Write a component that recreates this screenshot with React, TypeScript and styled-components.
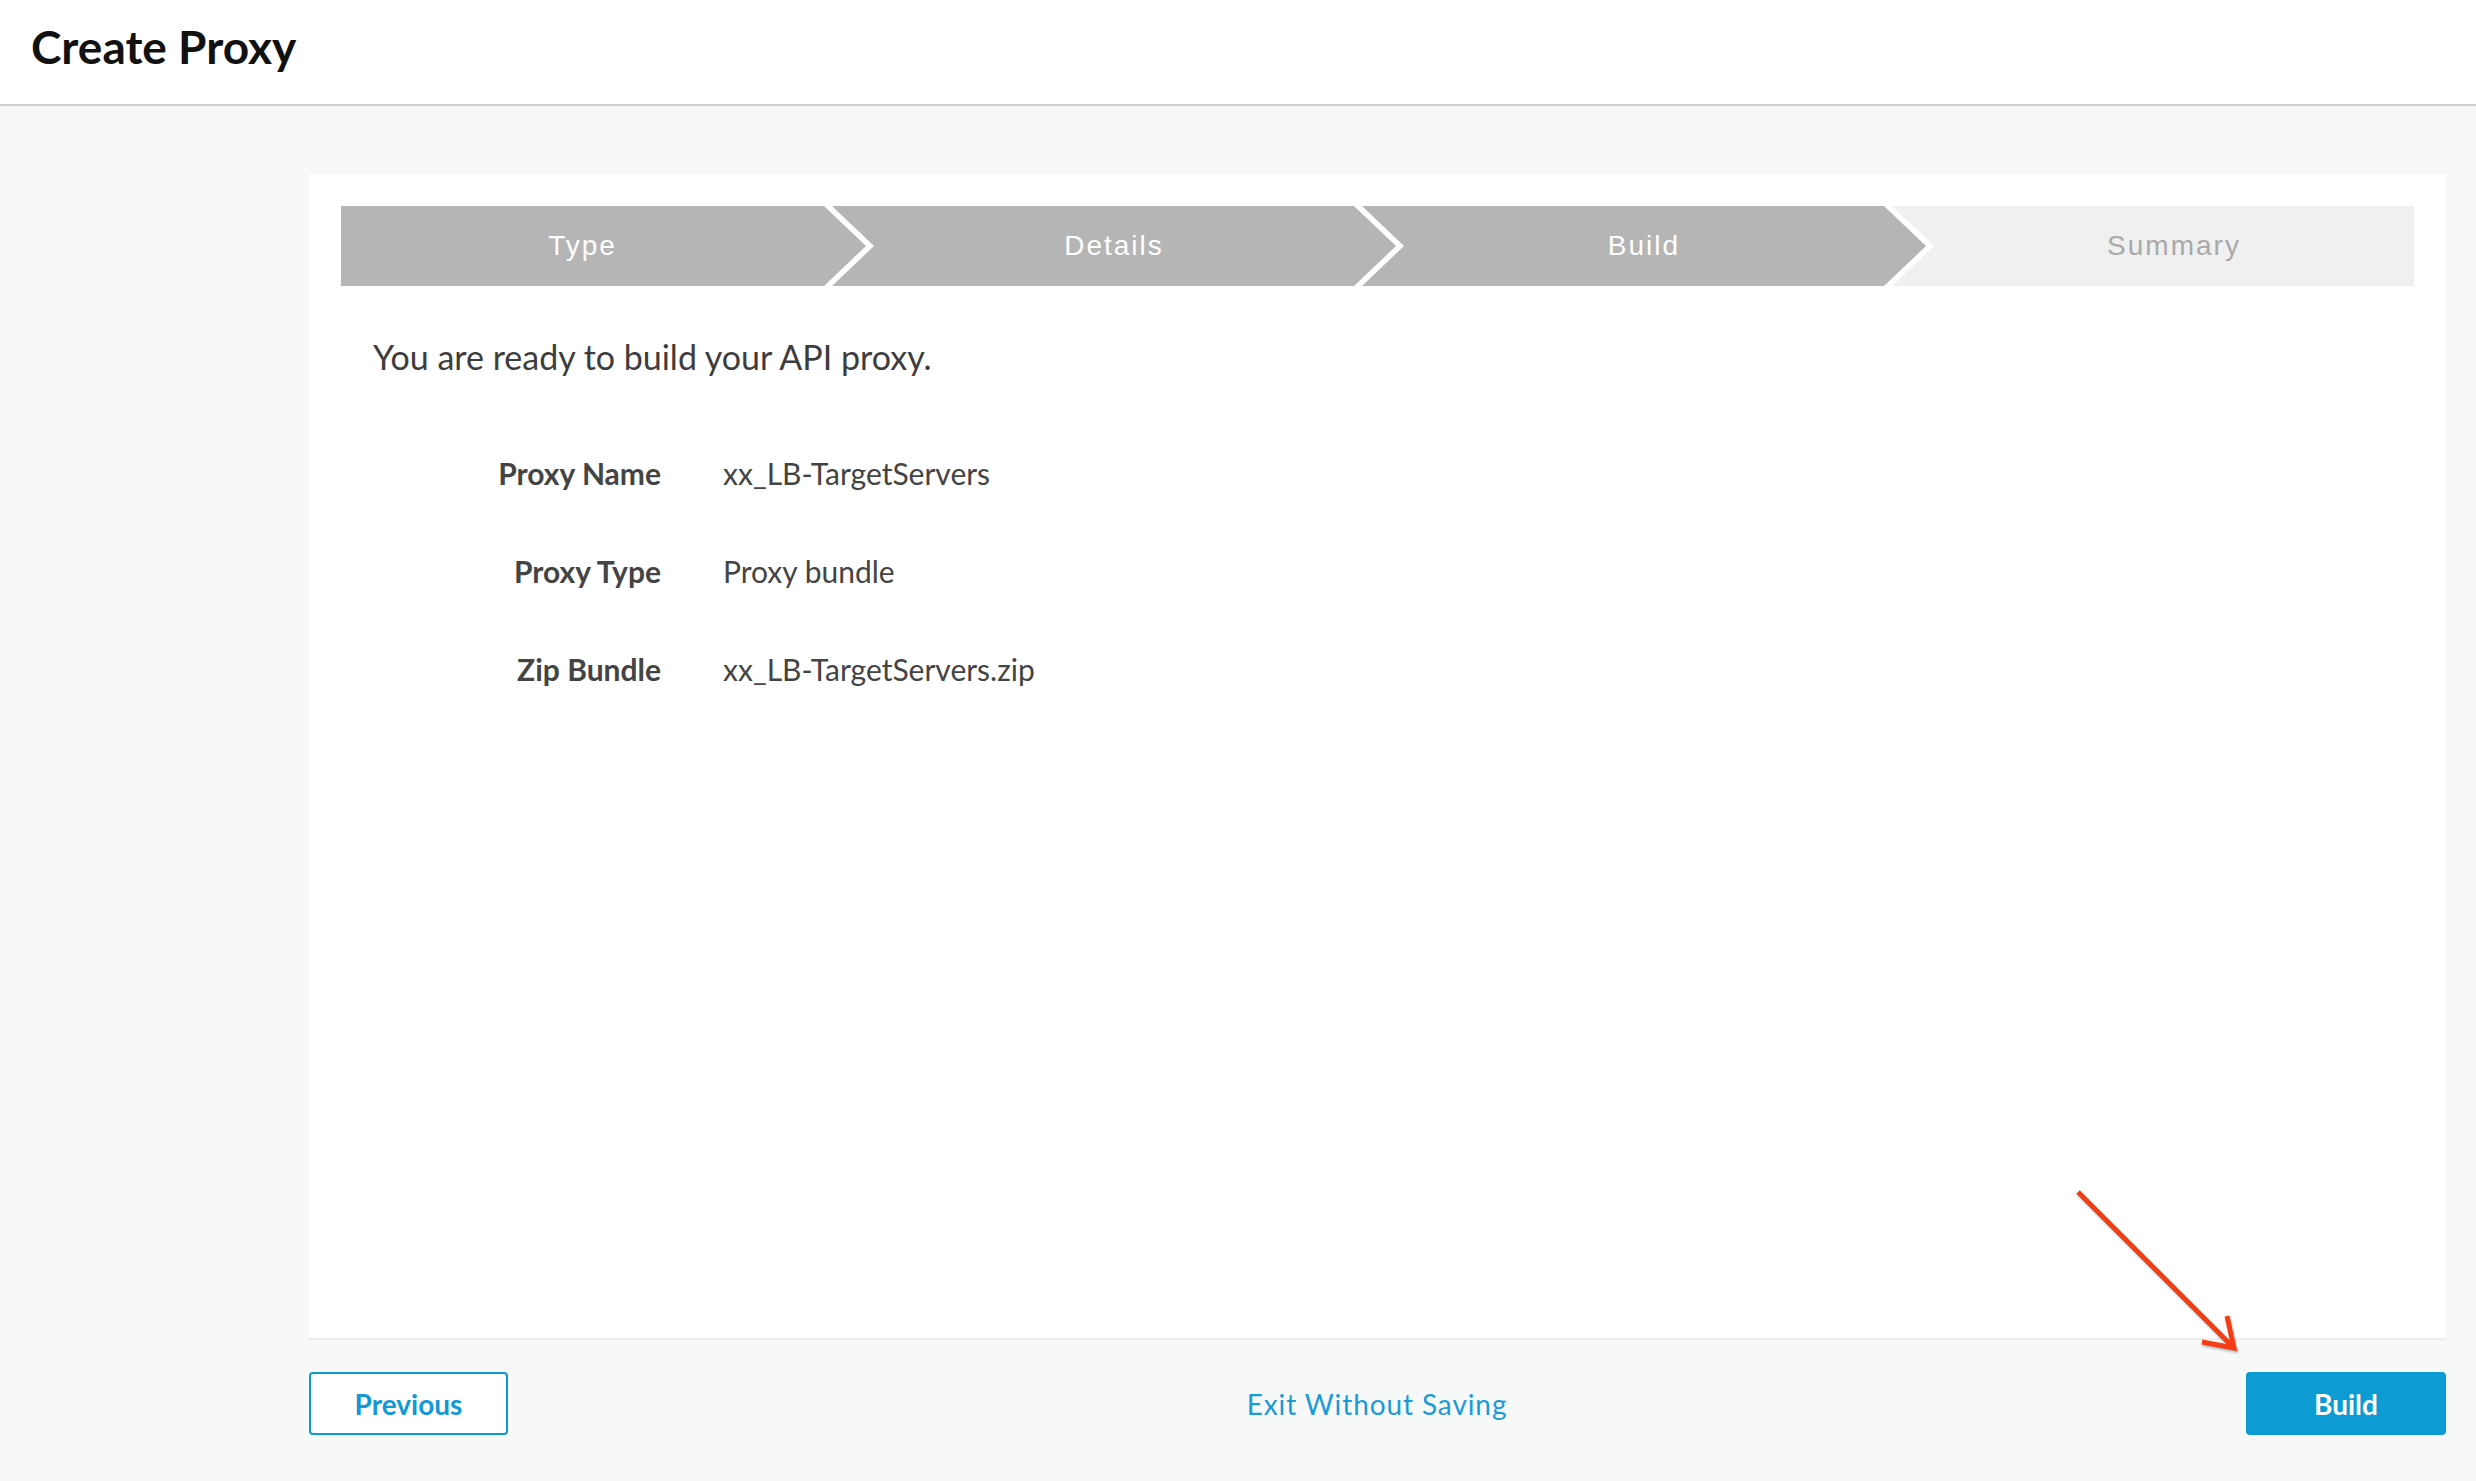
import React from "react";
import styled, { createGlobalStyle } from "styled-components";

const GlobalStyle = createGlobalStyle`
  html, body {
    margin: 0;
    padding: 0;
    background: #f7f8f8;
    font-family: Lato, "Open Sans", Arial, sans-serif;
  }
  * {
    box-sizing: border-box;
  }
`;

type StepState = "done" | "todo";
type StepShape = "first" | "middle" | "last";

const steps: { label: string; state: StepState; width: number }[] = [
  { label: "Type", state: "done", width: 525 },
  { label: "Details", state: "done", width: 564 },
  { label: "Build", state: "done", width: 564 },
  { label: "Summary", state: "todo", width: 522 },
];

const summary = [
  { label: "Proxy Name", value: "xx_LB-TargetServers" },
  { label: "Proxy Type", value: "Proxy bundle" },
  { label: "Zip Bundle", value: "xx_LB-TargetServers.zip" },
];

const ARROW = 42;
const GAP = 8;

const shapes: Record<StepShape, string> = {
  first: `polygon(0 0, calc(100% - ${ARROW}px) 0, 100% 50%, calc(100% - ${ARROW}px) 100%, 0 100%)`,
  middle: `polygon(0 0, calc(100% - ${ARROW}px) 0, 100% 50%, calc(100% - ${ARROW}px) 100%, 0 100%, ${ARROW}px 50%)`,
  last: `polygon(0 0, 100% 0, 100% 100%, 0 100%, ${ARROW}px 50%)`,
};

const App = () => {
  return (
    <Page>
      <GlobalStyle />
      <Header>
        <Title>Create Proxy</Title>
      </Header>
      <Main>
        <Panel>
          <Stepper>
            {steps.map((step, i) => {
              const shape: StepShape =
                i === 0 ? "first" : i === steps.length - 1 ? "last" : "middle";
              return (
                <Step key={step.label} $state={step.state} $shape={shape} $width={step.width}>
                  {step.label}
                </Step>
              );
            })}
          </Stepper>
          <Body>
            <Intro>You are ready to build your API proxy.</Intro>
            <SummaryGrid>
              {summary.map((row) => (
                <React.Fragment key={row.label}>
                  <SummaryLabel>{row.label}</SummaryLabel>
                  <SummaryValue>{row.value}</SummaryValue>
                </React.Fragment>
              ))}
            </SummaryGrid>
          </Body>
        </Panel>
        <Footer>
          <OutlineButton>Previous</OutlineButton>
          <ExitLink>Exit Without Saving</ExitLink>
          <PrimaryButton>Build</PrimaryButton>
        </Footer>
      </Main>
      <Callout width="200" height="200" viewBox="0 0 200 200">
        <g stroke="#f43d14" strokeWidth="5" fill="none" strokeLinecap="butt">
          <line x1="18" y1="17" x2="172" y2="171" />
          <polyline points="167,141 174,173 142,167" strokeLinejoin="miter" />
        </g>
      </Callout>
    </Page>
  );
};

const Page = styled.div`
  position: relative;
  min-height: 1481px;
  background: #f7f8f8;
`;

const Header = styled.header`
  height: 106px;
  background: #ffffff;
  border-bottom: 2px solid #cfcfcf;
  padding: 19px 31px 0;
`;

const Title = styled.h1`
  margin: 0;
  font-size: 46px;
  line-height: 56px;
  font-weight: 700;
  color: #111111;
`;

const Main = styled.main`
  padding: 68px 30px 0 309px;
`;

const Panel = styled.section`
  height: 1166px;
  background: #ffffff;
  border-bottom: 2px solid #eeeeee;
  padding: 32px;
`;

const Stepper = styled.div`
  display: flex;
  height: 80px;
`;

const Step = styled.div<{ $state: StepState; $shape: StepShape; $width: number }>`
  flex: 0 0 ${(p) => p.$width}px;
  margin-left: ${(p) => (p.$shape === "first" ? 0 : -(ARROW - GAP))}px;
  padding-left: ${(p) => (p.$shape === "first" ? 0 : ARROW)}px;
  padding-right: ${(p) => (p.$shape === "last" ? 0 : ARROW)}px;
  display: flex;
  align-items: center;
  justify-content: center;
  clip-path: ${(p) => shapes[p.$shape]};
  background: ${(p) => (p.$state === "done" ? "#b5b5b5" : "#f0f0f0")};
  color: ${(p) => (p.$state === "done" ? "#ffffff" : "#a9a9a9")};
  font-family: "Liberation Sans", Arial, sans-serif;
  font-size: 28px;
  letter-spacing: 2px;
`;

const Body = styled.div`
  padding-left: 32px;
`;

const Intro = styled.p`
  margin: 51px 0 0;
  font-size: 34px;
  line-height: 40px;
  color: #3d3d3d;
`;

const SummaryGrid = styled.div`
  display: grid;
  grid-template-columns: 288px 1fr;
  column-gap: 62px;
  row-gap: 58px;
  margin-top: 76px;
`;

const SummaryLabel = styled.div`
  text-align: right;
  font-size: 30px;
  line-height: 40px;
  font-weight: 700;
  color: #444444;
`;

const SummaryValue = styled.div`
  font-size: 30px;
  line-height: 40px;
  color: #444444;
`;

const Footer = styled.footer`
  display: flex;
  align-items: center;
  justify-content: space-between;
  padding: 32px 0 46px;
`;

const OutlineButton = styled.button`
  width: 199px;
  height: 63px;
  border: 2px solid #0b9bd3;
  border-radius: 4px;
  background: #ffffff;
  color: #1398d3;
  font-family: Lato, "Open Sans", Arial, sans-serif;
  font-size: 28px;
  font-weight: 700;
  cursor: pointer;
`;

const PrimaryButton = styled(OutlineButton)`
  width: 200px;
  background: #0c9bd3;
  color: #ffffff;
`;

const ExitLink = styled.a`
  font-size: 28px;
  letter-spacing: 0.9px;
  color: #1a9bd6;
  cursor: pointer;
`;

const Callout = styled.svg`
  position: absolute;
  left: 2060px;
  top: 1175px;
  filter: drop-shadow(1px 2px 1px rgba(0, 0, 0, 0.25));
  pointer-events: none;
`;

export default App;
